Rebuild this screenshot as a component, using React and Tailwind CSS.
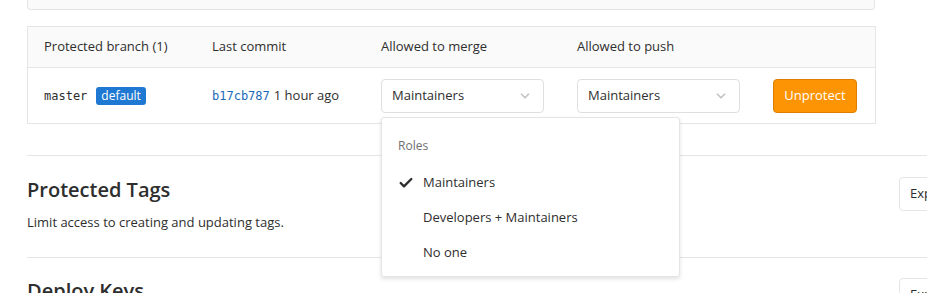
import { Check, ChevronDown } from 'lucide-react';

const font = { fontFamily: '"Open Sans", "Noto Sans", sans-serif' };

function Select({ label }) {
  return (
    <div className="flex h-[34px] w-[163px] items-center justify-between rounded-[4px] border border-[#dfdfdf] bg-white pl-[10px] pr-[11px] text-[13px] text-[#2e2e2e]">
      <span>{label}</span>
      <ChevronDown className="h-[14px] w-[14px] text-[#c4c4c4]" strokeWidth={3} />
    </div>
  );
}

export default function App() {
  return (
    <div className="relative h-[293px] w-[927px] overflow-hidden bg-white pl-[27px]" style={font}>
      {/* card above, cut off */}
      <div className="h-[10px] w-[848px] rounded-b-[4px] border border-t-0 border-[#e5e5e5] bg-[#fafafa]" />

      {/* protected branches table */}
      <div className="mt-[16px] w-[849px] border border-[#e5e5e5] text-[13px] text-[#2e2e2e]">
        <div className="flex h-[41px] items-center border-b border-[#e5e5e5] bg-[#fafafa] pl-[16px]">
          <div className="w-[168px]">Protected branch (1)</div>
          <div className="w-[169px]">Last commit</div>
          <div className="w-[196px]">Allowed to merge</div>
          <div>Allowed to push</div>
        </div>
        <div className="flex h-[55px] items-center pl-[16px] pt-[1px]">
          <div className="flex w-[168px] items-center gap-[9px]">
            <span className="font-['DejaVu_Sans_Mono',monospace] text-[12px]">master</span>
            <span className="rounded-[3px] bg-[#1f78d1] px-[5px] py-[1px] text-[12px] leading-[16px] text-white">default</span>
          </div>
          <div className="flex w-[169px] items-center gap-[4px]">
            <span className="font-['DejaVu_Sans_Mono',monospace] text-[12px] text-[#1b69b6]">b17cb787</span>
            <span>1 hour ago</span>
          </div>
          <div className="w-[196px]">
            <Select label="Maintainers" />
          </div>
          <div className="w-[196px]">
            <Select label="Maintainers" />
          </div>
          <button className="h-[34px] w-[84px] rounded-[4px] border border-[#de7e00] bg-[#fc9403] text-[13px] text-white">
            Unprotect
          </button>
        </div>
      </div>

      {/* protected tags */}
      <div className="mt-[31px] flex w-[960px] items-start justify-between border-t border-[#e5e5e5] pt-[20px]">
        <div>
          <h4 className="text-[20px] font-semibold leading-[28px] text-[#2e2e2e]">Protected Tags</h4>
          <p className="mt-[9px] text-[13px] text-[#2e2e2e]">Limit access to creating and updating tags.</p>
        </div>
        <button className="mr-[26px] mt-[1px] h-[34px] w-[62px] rounded-[4px] border border-[#e5e5e5] bg-white pl-[10px] text-left text-[13px] text-[#2e2e2e]">
          Expand
        </button>
      </div>

      <div className="mt-[24px] flex w-[960px] items-start justify-between border-t border-[#e5e5e5] pt-[19px]">
        <h4 className="text-[20px] font-semibold leading-[28px] text-[#2e2e2e]">Deploy Keys</h4>
        <button className="mr-[26px] mt-[1px] h-[34px] w-[62px] rounded-[4px] border border-[#e5e5e5] bg-white pl-[10px] text-left text-[13px] text-[#2e2e2e]">
          Expand
        </button>
      </div>

      {/* open dropdown */}
      <div className="absolute left-[381px] top-[117px] h-[160px] w-[299px] rounded-[3px] border border-[#e5e5e5] bg-white py-[14px] text-[13px] shadow-[0_2px_4px_rgba(0,0,0,0.12)]">
        <div className="pl-[16px] text-[12px] leading-[28px] text-[#707070]">Roles</div>
        <ul className="mt-[5px]">
          <li className="flex h-[35px] items-center pl-[16px] text-[#2e2e2e]">
            <Check className="mr-[9px] h-[16px] w-[16px]" strokeWidth={3.5} />
            Maintainers
          </li>
          <li className="flex h-[35px] items-center pl-[41px] text-[#2e2e2e]">Developers + Maintainers</li>
          <li className="flex h-[35px] items-center pl-[41px] text-[#2e2e2e]">No one</li>
        </ul>
      </div>
    </div>
  );
}
